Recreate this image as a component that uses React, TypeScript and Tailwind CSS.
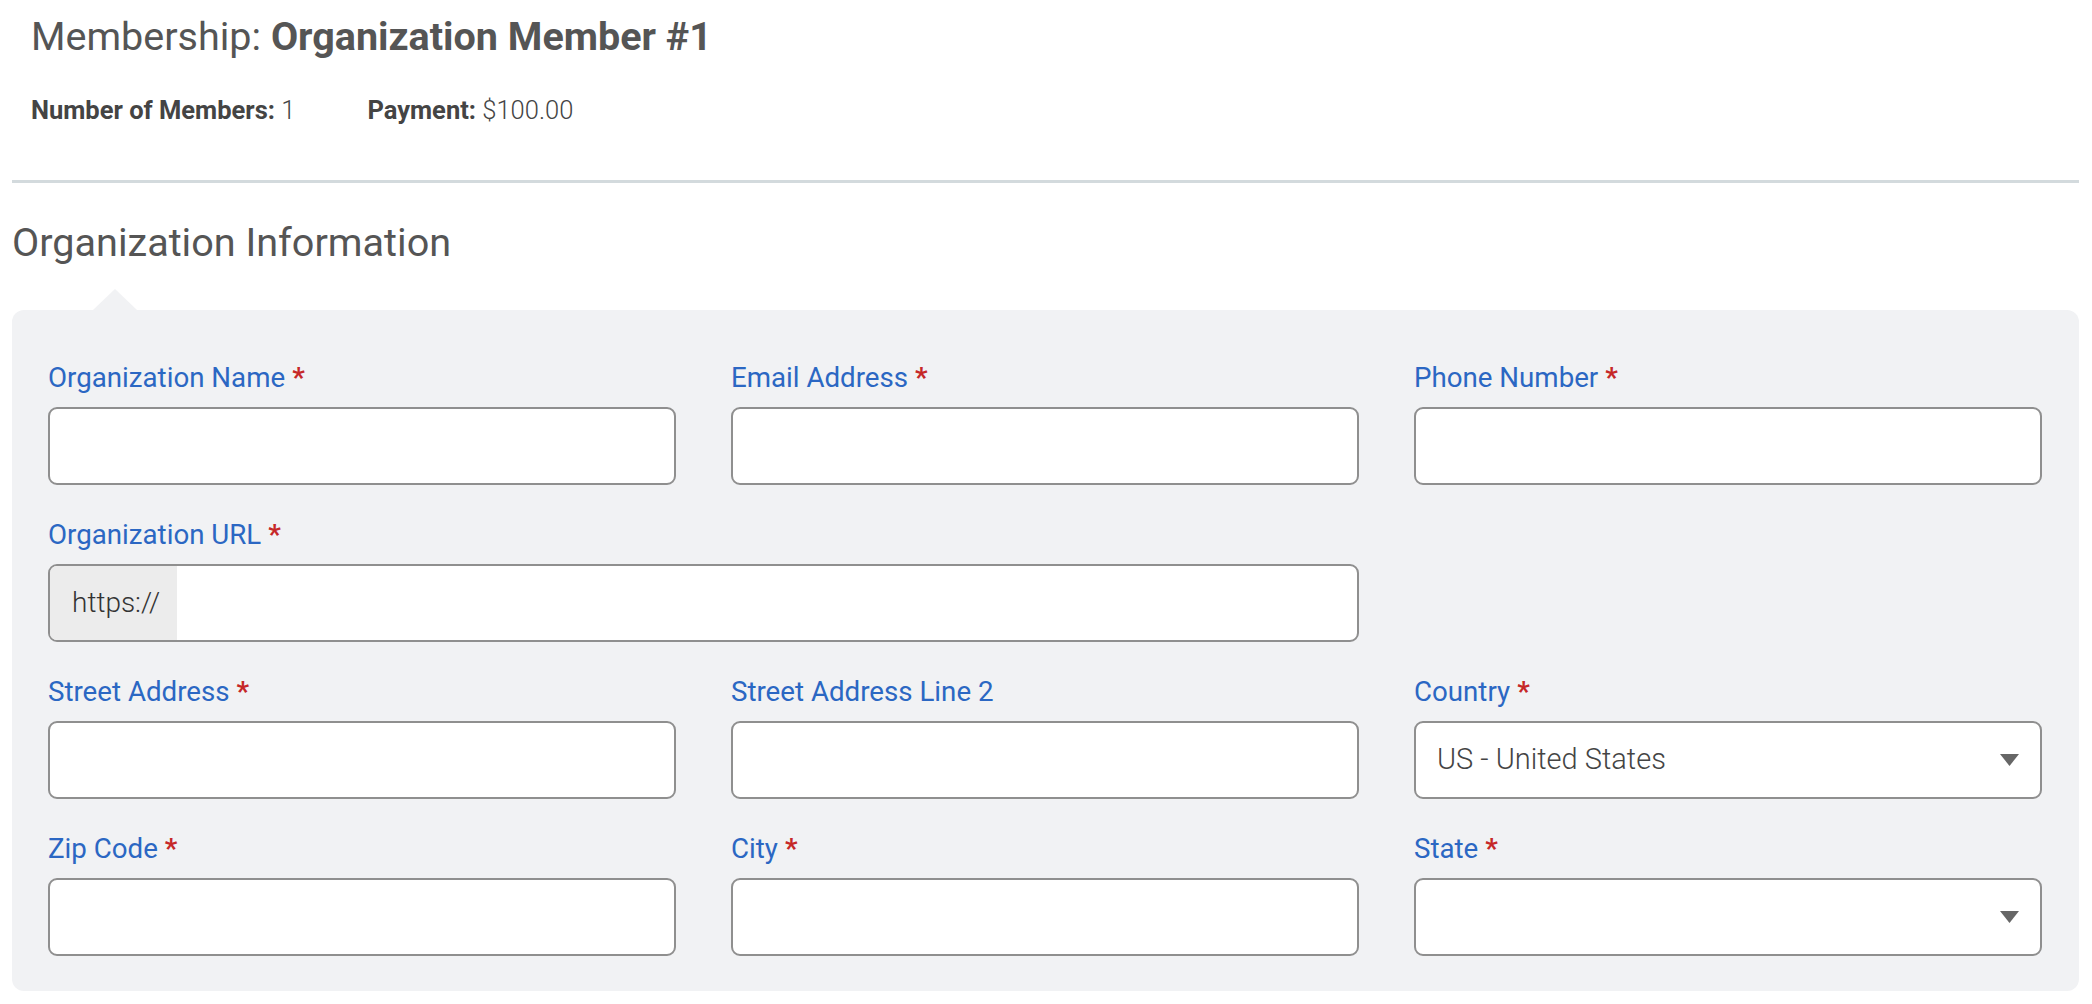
import React from "react";

const FONT = { fontFamily: "Roboto, 'Liberation Sans', sans-serif" };

type FieldProps = {
  label: string;
  required?: boolean;
  children: React.ReactNode;
  className?: string;
};

function Field({ label, required, children, className }: FieldProps) {
  return (
    <div className={className}>
      <label className="block text-[27.7px] leading-[34px] text-[#2b67c3]">
        {label}
        {required && <span className="ml-[7px] font-bold text-[#c62828]">*</span>}
      </label>
      <div className="mt-[12px]">{children}</div>
    </div>
  );
}

function TextInput() {
  return (
    <input
      type="text"
      className="block h-[78px] w-full rounded-[9px] border-2 border-[#8f8f8f] bg-white px-[22px] text-[29px] font-light text-[#333] outline-none"
    />
  );
}

function SelectBox({ value }: { value?: string }) {
  return (
    <div className="flex h-[78px] w-full items-center justify-between rounded-[9px] border-2 border-[#8f8f8f] bg-white pl-[21px] pr-[21px]">
      <span className="text-[29px] font-light text-[#444]">{value ?? ""}</span>
      <svg width="19" height="12" viewBox="0 0 19 12">
        <polygon points="0,0 19,0 9.5,12" fill="#666" />
      </svg>
    </div>
  );
}

function UrlInput() {
  return (
    <div className="flex h-[78px] w-full overflow-hidden rounded-[9px] border-2 border-[#8f8f8f] bg-white">
      <div className="flex w-[127px] items-center bg-[#ececec] pl-[22px] text-[28px] font-light text-[#333]">
        https://
      </div>
      <input type="text" className="flex-1 px-[22px] text-[29px] font-light outline-none" />
    </div>
  );
}

export default function App() {
  return (
    <div className="h-[1004px] w-full overflow-hidden bg-white" style={FONT}>
      <div className="pl-[12px] pr-[13px]">
        <div className="pl-[19px] pt-[13px]">
          <h1 className="text-[39.5px] leading-[48px] text-[#555]">
            Membership: <span className="font-bold">Organization Member #1</span>
          </h1>
          <div className="mt-[33px] flex gap-[72px] text-[25.5px] leading-[32px] text-[#444]">
            <div>
              <span className="font-bold">Number of Members:</span> <span className="font-light">1</span>
            </div>
            <div>
              <span className="font-bold">Payment:</span> <span className="font-light">$100.00</span>
            </div>
          </div>
        </div>

        <div className="mt-[54px] border-t-[3px] border-[#d3dadd]" />

        <h2 className="mt-[36px] text-[39.6px] leading-[48px] text-[#555]">Organization Information</h2>

        <div className="mt-[22px] pl-[81px]">
          <svg width="44" height="21" viewBox="0 0 44 21" className="block">
            <polygon points="0,21 22,0 44,21" fill="#f1f2f4" />
          </svg>
        </div>

        <div className="rounded-[12px] bg-[#f1f2f4] pl-[36px] pr-[37px] pt-[51px] pb-[35px]">
          <div className="grid grid-cols-3 gap-x-[55px] gap-y-[33px]">
            <Field label="Organization Name" required>
              <TextInput />
            </Field>
            <Field label="Email Address" required>
              <TextInput />
            </Field>
            <Field label="Phone Number" required>
              <TextInput />
            </Field>

            <Field label="Organization URL" required className="col-span-2">
              <UrlInput />
            </Field>
            <div />

            <Field label="Street Address" required>
              <TextInput />
            </Field>
            <Field label="Street Address Line 2">
              <TextInput />
            </Field>
            <Field label="Country" required>
              <SelectBox value="US - United States" />
            </Field>

            <Field label="Zip Code" required>
              <TextInput />
            </Field>
            <Field label="City" required>
              <TextInput />
            </Field>
            <Field label="State" required>
              <SelectBox />
            </Field>
          </div>
        </div>
      </div>
    </div>
  );
}
